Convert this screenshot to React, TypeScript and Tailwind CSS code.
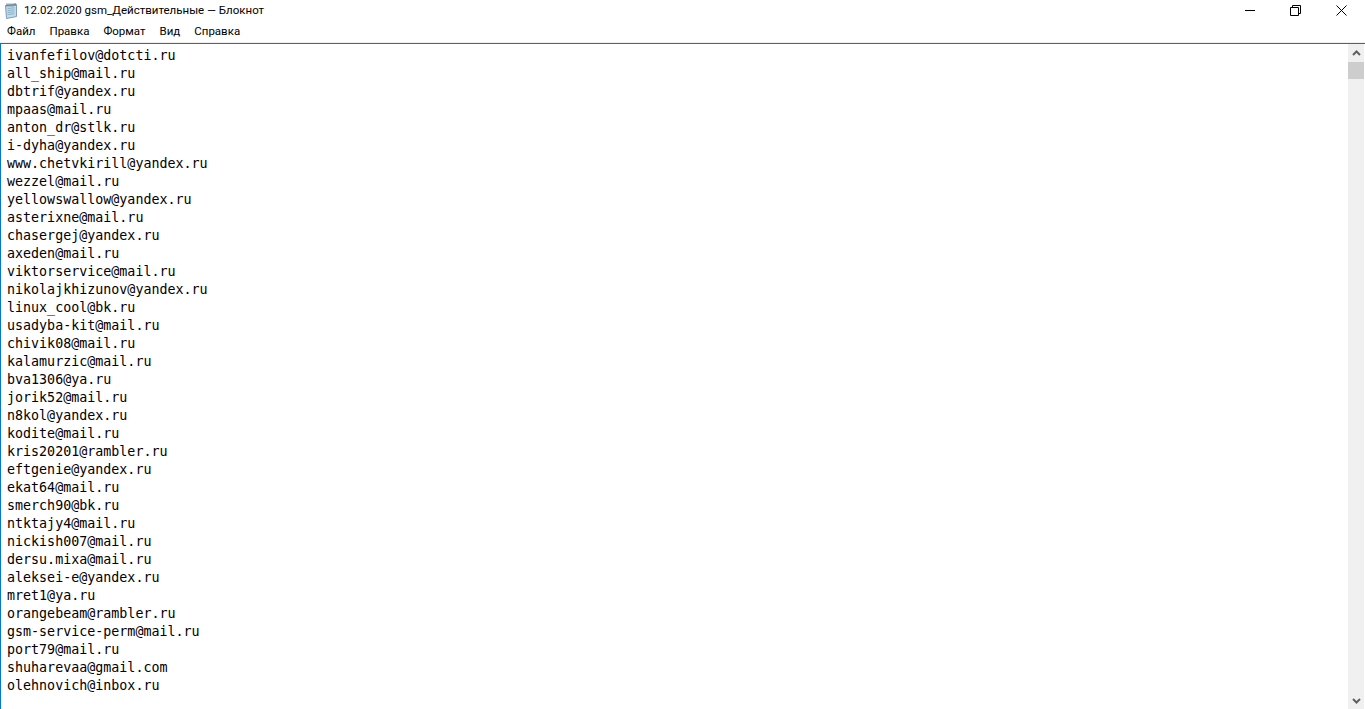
const emails = [
  "ivanfefilov@dotcti.ru",
  "all_ship@mail.ru",
  "dbtrif@yandex.ru",
  "mpaas@mail.ru",
  "anton_dr@stlk.ru",
  "i-dyha@yandex.ru",
  "www.chetvkirill@yandex.ru",
  "wezzel@mail.ru",
  "yellowswallow@yandex.ru",
  "asterixne@mail.ru",
  "chasergej@yandex.ru",
  "axeden@mail.ru",
  "viktorservice@mail.ru",
  "nikolajkhizunov@yandex.ru",
  "linux_cool@bk.ru",
  "usadyba-kit@mail.ru",
  "chivik08@mail.ru",
  "kalamurzic@mail.ru",
  "bva1306@ya.ru",
  "jorik52@mail.ru",
  "n8kol@yandex.ru",
  "kodite@mail.ru",
  "kris20201@rambler.ru",
  "eftgenie@yandex.ru",
  "ekat64@mail.ru",
  "smerch90@bk.ru",
  "ntktajy4@mail.ru",
  "nickish007@mail.ru",
  "dersu.mixa@mail.ru",
  "aleksei-e@yandex.ru",
  "mret1@ya.ru",
  "orangebeam@rambler.ru",
  "gsm-service-perm@mail.ru",
  "port79@mail.ru",
  "shuharevaa@gmail.com",
  "olehnovich@inbox.ru",
];

const menu = ["Файл", "Правка", "Формат", "Вид", "Справка"];

function NotepadIcon() {
  return (
    <svg width="16" height="18" viewBox="0 0 16 18" className="shrink-0">
      <path d="M2.5 3.5L13.5 2.5V14.5L3.5 16.5z" fill="#bfdcec" stroke="#7d9db3" />
      <path d="M4.5 6.5l7-.7M4.5 8.5l7-.7M4.5 10.5l7-.7M4.5 12.5l7-.7" stroke="#8fb2c8" />
      <path d="M4 1.5v3M6 1.5v3M8 1.5v3M10 1.5v3M12 1v3" stroke="#55697a" />
    </svg>
  );
}

export default function App() {
  return (
    <div className="flex h-[709px] w-[1365px] flex-col overflow-hidden bg-white font-['Roboto','Noto_Sans',sans-serif] text-black">
      {/* заголовок окна */}
      <div className="flex h-[21px] items-center pl-[3px]">
        <NotepadIcon />
        <span className="ml-[5px] mt-px text-[11.5px] leading-none">12.02.2020 gsm_Действительные — Блокнот</span>
        <div className="ml-auto flex items-center">
          <div className="h-px w-[10px] bg-black" />
          <svg width="11" height="11" viewBox="0 0 11 11" className="ml-[35px]" fill="none" stroke="#000">
            <path d="M.5 2.5h8v8h-8zM2.5 2V.5h8v8H9" />
          </svg>
          <svg width="11" height="11" viewBox="0 0 11 11" className="ml-[35px] mr-[18px]" fill="none" stroke="#000">
            <path d="M.5.5l10 10M10.5.5l-10 10" />
          </svg>
        </div>
      </div>
      {/* меню */}
      <div className="flex h-[21px] items-center gap-[14px] pl-[7px] text-[11.5px]">
        {menu.map((item) => (
          <span key={item}>{item}</span>
        ))}
      </div>
      <div className="h-px bg-[#f0f0f0]" />
      <div className="h-px bg-[#0078d7]" />
      <div className="flex min-h-0 flex-1 border-l border-[#0078d7]">
        <div className="flex-1 pl-[6px] pt-[3px] font-['DejaVu_Sans_Mono',monospace] text-[13.33px] leading-[18px]">
          {emails.map((email) => (
            <div key={email}>{email}</div>
          ))}
        </div>
        {/* полоса прокрутки */}
        <div className="mr-px flex w-[16px] flex-col bg-[#f0f0f0]">
          <div className="flex h-[18px] items-center justify-center">
            <svg width="9" height="6" viewBox="0 0 9 6" fill="none" stroke="#606060" strokeWidth="2">
              <path d="M1 5l3.5-3.5L8 5" />
            </svg>
          </div>
          <div className="h-[17px] bg-[#cdcdcd]" />
          <div className="mt-auto flex h-[17px] items-center justify-center">
            <svg width="9" height="6" viewBox="0 0 9 6" fill="none" stroke="#606060" strokeWidth="2">
              <path d="M1 1l3.5 3.5L8 1" />
            </svg>
          </div>
        </div>
      </div>
    </div>
  );
}
